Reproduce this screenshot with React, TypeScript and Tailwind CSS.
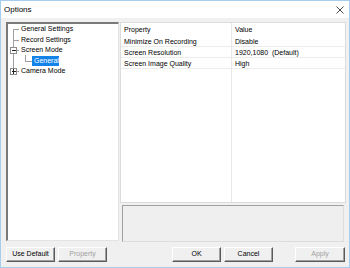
import React from "react";

const font = { fontFamily: '"Liberation Sans", Arial, sans-serif' };

function TreeLines() {
  return (
    <svg className="absolute left-0 top-0" width="60" height="60" viewBox="0 0 60 60" shapeRendering="crispEdges">
      <g stroke="#a0a0a0" strokeWidth="1" fill="none">
        <line x1="5.5" y1="5" x2="5.5" y2="23" />
        <line x1="5.5" y1="29" x2="5.5" y2="44" />
        <line x1="5" y1="5.5" x2="11" y2="5.5" />
        <line x1="5" y1="16.5" x2="11" y2="16.5" />
        <line x1="9" y1="26.5" x2="11" y2="26.5" />
        <line x1="9" y1="47.5" x2="11" y2="47.5" />
        <line x1="17.5" y1="31" x2="17.5" y2="37" />
        <line x1="17" y1="37.5" x2="24" y2="37.5" />
        <rect x="2.5" y="23.5" width="6" height="6" stroke="#8c8c8c" fill="#fff" />
        <rect x="2.5" y="44.5" width="6" height="6" stroke="#8c8c8c" fill="#fff" />
      </g>
      <g stroke="#222" strokeWidth="1">
        <line x1="4" y1="26.5" x2="8" y2="26.5" />
        <line x1="4" y1="47.5" x2="8" y2="47.5" />
        <line x1="5.5" y1="45" x2="5.5" y2="50" />
      </g>
    </svg>
  );
}

function Btn({ label, disabled, w }: { label: string; disabled?: boolean; w: string }) {
  return (
    <div
      className={`${w} h-[15px] flex items-center justify-center bg-[#f0f0f0] border-t border-l border-t-white border-l-white border-r border-b border-r-[#5a5a5a] border-b-[#5a5a5a] shadow-[inset_-1px_-1px_0_#a0a0a0] text-[7px] ${disabled ? "text-[#a0a0a0]" : "text-black"}`}
    >
      {label}
    </div>
  );
}

export default function App() {
  const rows = [
    ["Minimize On Recording", "Disable"],
    ["Screen Resolution", "1920,1080  (Default)"],
    ["Screen Image Quality", "High"],
  ];
  return (
    <div style={font} className="w-[350px] h-[268px] border border-[#a5cdf0] bg-[#f0f0f0] flex flex-col overflow-hidden">
      {/* title bar */}
      <div className="h-[17px] bg-white flex items-center justify-between pl-[3px] pr-[5px] shrink-0">
        <span className="text-[8px] text-black leading-none">Options</span>
        <svg width="8" height="8" viewBox="0 0 8 8">
          <path d="M0.5 0.5 L7.5 7.5 M7.5 0.5 L0.5 7.5" stroke="#333" strokeWidth="0.9" />
        </svg>
      </div>

      {/* main */}
      <div className="flex pl-[5px] pt-[4px] shrink-0">
        {/* tree */}
        <div className="relative w-[113px] h-[219px] bg-white border-t-2 border-l-2 border-t-[#7a7a7a] border-l-[#7a7a7a] border-r border-b border-r-[#e3e3e3] border-b-[#e3e3e3] text-[7px] text-black">
          <TreeLines />
          <div className="relative flex flex-col">
            <div className="h-[10.5px] leading-[10.5px] pl-[13px] whitespace-nowrap">General Settings</div>
            <div className="h-[10.5px] leading-[10.5px] pl-[13px] whitespace-nowrap">Record Settings</div>
            <div className="h-[10.5px] leading-[10.5px] pl-[13px] whitespace-nowrap">Screen Mode</div>
            <div className="h-[10.5px] leading-[10.5px] pl-[24px] whitespace-nowrap">
              <span className="inline-block w-[27px] h-[10px] leading-[10px] bg-[#1383ea] text-white pl-[2px]">General</span>
            </div>
            <div className="h-[10.5px] leading-[10.5px] pl-[13px] whitespace-nowrap">Camera Mode</div>
          </div>
        </div>

        {/* right column */}
        <div className="ml-px w-[226px] flex flex-col">
          <div className="h-[181px] bg-white border border-[#dcdcdc] flex text-[7px] text-black">
            <div className="w-[111px] border-r border-[#e8e8e8] flex flex-col">
              <div className="h-[13px] leading-[13px] pl-[3px]">Property</div>
              {rows.map((r) => (
                <div key={r[0]} className="h-[11px] leading-[11px] pl-[3px] border-b border-[#ececec] whitespace-nowrap">
                  {r[0]}
                </div>
              ))}
            </div>
            <div className="flex-1 flex flex-col">
              <div className="h-[13px] leading-[13px] pl-[3px]">Value</div>
              {rows.map((r) => (
                <div key={r[0]} className="h-[11px] leading-[11px] pl-[3px] border-b border-[#ececec] whitespace-pre">
                  {r[1]}
                </div>
              ))}
            </div>
          </div>
          <div className="mt-[2px] mx-[2px] h-[37px] bg-[#efefef] border-t border-l border-[#a0a0a0] border-r border-b border-r-[#dcdcdc] border-b-[#dcdcdc]" />
        </div>
      </div>

      {/* buttons */}
      <div className="flex items-center pl-[5px] mt-[5px] shrink-0">
        <Btn label="Use Default" w="w-[49px]" />
        <div className="ml-[3px]">
          <Btn label="Property" disabled w="w-[49px]" />
        </div>
        <div className="ml-[65px]">
          <Btn label="OK" w="w-[49px]" />
        </div>
        <div className="ml-[3px]">
          <Btn label="Cancel" w="w-[49px]" />
        </div>
        <div className="ml-[22px]">
          <Btn label="Apply" disabled w="w-[50px]" />
        </div>
      </div>
    </div>
  );
}
